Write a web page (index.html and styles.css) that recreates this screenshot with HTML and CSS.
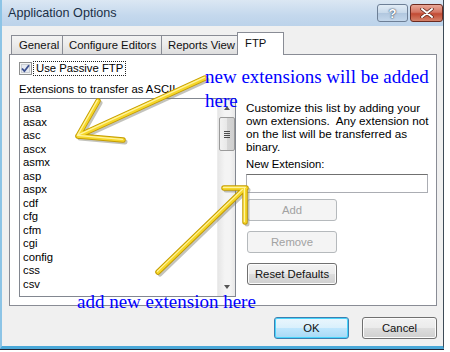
FILE: index.html
```html
<!DOCTYPE html>
<html lang="en">
<head>
	<meta charset="utf-8" />
	<title>Application Options</title>
	<link rel="stylesheet" href="styles.css">
</head>
<body>
<div class="page">
	<div class="window">
		<div class="titlebar">
			<span class="title">Application Options</span>
			<div class="caption-buttons">
				<span class="cap-btn cap-help">?</span>
				<span class="cap-btn cap-close">
					<svg width="14" height="10" viewBox="0 0 14 10"><path d="M2 1 L12 9 M12 1 L2 9" stroke="#5a2318" stroke-width="3.4" stroke-linecap="round"/><path d="M2 1 L12 9 M12 1 L2 9" stroke="#fff" stroke-width="2" stroke-linecap="round"/></svg>
				</span>
			</div>
		</div>

		<div class="client">
			<div class="tabs">
				<span class="tab tab-general">General</span>
				<span class="tab tab-editors">Configure Editors</span>
				<span class="tab tab-reports">Reports View</span>
				<span class="tab tab-ftp selected">FTP</span>
			</div>

			<div class="tab-panel">
				<div class="left-col">
					<div class="passive-row">
						<svg class="checkbox" width="13" height="13" viewBox="0 0 13 13">
							<rect x="0.5" y="0.5" width="12" height="12" fill="#f4f4f4" stroke="#8e8f8f"/>
							<rect x="2.5" y="2.5" width="8" height="8" fill="#e6eaf0" stroke="#c9cdd3"/>
							<path d="M3 6.5 L5.4 9.2 L10 3.2" fill="none" stroke="#3b4f8f" stroke-width="1.8"/>
						</svg>
						<span class="focus-label">Use Passive FTP</span>
					</div>
					<div class="ascii-label">Extensions to transfer as ASCII</div>
					<div class="listbox">
						<ul class="ext-list">
							<li>asa</li>
							<li>asax</li>
							<li>asc</li>
							<li>ascx</li>
							<li>asmx</li>
							<li>asp</li>
							<li>aspx</li>
							<li>cdf</li>
							<li>cfg</li>
							<li>cfm</li>
							<li>cgi</li>
							<li>config</li>
							<li>css</li>
							<li>csv</li>
						</ul>
						<div class="scrollbar">
							<span class="scroll-arrow up"></span>
							<span class="scroll-thumb"><span class="grip"></span></span>
							<span class="scroll-track"></span>
							<span class="scroll-arrow down"></span>
						</div>
					</div>
				</div>

				<div class="right-col">
					<p class="hint">
						Customize this list by adding your<br>
						own extensions.&nbsp; Any extension not<br>
						on the list will be transferred as<br>
						binary.
					</p>
					<div class="new-label">New Extension:</div>
					<div class="text-input"></div>
					<span class="button disabled">Add</span>
					<span class="button disabled">Remove</span>
					<span class="button">Reset Defaults</span>
				</div>
			</div>

			<div class="footer">
				<span class="button dialog-btn default">OK</span>
				<span class="button dialog-btn">Cancel</span>
			</div>
		</div>
	</div>

	<!-- annotations drawn over the screenshot -->
	<svg class="arrows" width="450" height="352" viewBox="0 0 450 352">
		<g class="shadow" stroke="#7a7a6a" stroke-opacity="0.45" stroke-width="5" stroke-linecap="round" fill="none" transform="translate(2 2)">
			<path d="M205 78 L78 136 M78 136 L98 101 M78 136 L123 140"/>
			<path d="M158 272 L243 190 M224 188 L246 188 M245 188 L245 222"/>
		</g>
		<g stroke="#c49c00" stroke-width="5.5" stroke-linecap="round" fill="none">
			<path d="M205 78 L78 136 M78 136 L98 101 M78 136 L123 140"/>
			<path d="M158 272 L243 190 M224 188 L246 188 M245 188 L245 222"/>
		</g>
		<g stroke="#f6d72a" stroke-width="3.6" stroke-linecap="round" fill="none">
			<path d="M205 78 L78 136 M78 136 L98 101 M78 136 L123 140"/>
			<path d="M158 272 L243 190 M224 188 L246 188 M245 188 L245 222"/>
		</g>
		<g stroke="#fff3a0" stroke-width="1.2" stroke-linecap="round" fill="none" transform="translate(-0.6 -0.6)">
			<path d="M205 78 L78 136 M78 136 L98 101 M78 136 L123 140"/>
			<path d="M158 272 L243 190 M224 188 L246 188 M245 188 L245 222"/>
		</g>
	</svg>
	<div class="note note-top">new extensions will be added<br>here</div>
	<div class="note note-bottom">add new extension here</div>
</div>
</body>
</html>
```

FILE: styles.css
```css
body {
	margin: 0;
	background: #fff;
	font-family: "Liberation Sans", Arial, sans-serif;
	font-size: 11.3px;
	color: #000;
}
.page {
	position: relative;
	width: 450px;
	height: 352px;
	overflow: hidden;
}
.window {
	box-sizing: border-box;
	width: 444px;
	height: 349px;
	background: #f0f0f0;
	border-left: 2px solid #8cc4e6;
	border-right: 1px solid #3d4a57;
	border-bottom: 3px solid #4aa8d8;
	box-shadow: 0 1px 0 #223;
	display: flex;
	flex-direction: column;
}
.titlebar {
	height: 26px;
	display: flex;
	align-items: flex-start;
	justify-content: space-between;
	background: linear-gradient(#dbe7f3, #c4d8ed 60%, #bcd3ea);
}
.title {
	margin: 6px 0 0 6px;
	font-size: 12.6px;
	color: #1b2f46;
}
.caption-buttons {
	display: flex;
	gap: 2px;
	margin-top: 4px;
}
.cap-btn {
	box-sizing: border-box;
	height: 18px;
	border: 1px solid #6d7f96;
	border-radius: 3px;
	display: flex;
	align-items: center;
	justify-content: center;
}
.cap-help {
	width: 31px;
	background: linear-gradient(#e2ecf6, #c8d9ea 48%, #b1c7df 52%, #c4d7eb);
	color: #fff;
	font-weight: bold;
	font-size: 13px;
	text-shadow: 0 0 2px #34465e, 0 0 1px #34465e;
}
.cap-close {
	width: 33px;
	border-color: #6b2a20;
	background: linear-gradient(#e9a898, #d47563 45%, #c24a33 55%, #d5826a);
}
.client {
	flex: 1;
	display: flex;
	flex-direction: column;
	padding: 6px 0 0 7px;
}
.tabs {
	display: flex;
	align-items: flex-end;
	height: 22px;
	padding-left: 2px;
	position: relative;
	z-index: 1;
}
.tab {
	box-sizing: border-box;
	height: 19px;
	margin-right: -1px;
	padding: 3px 0 0 6px;
	border: 1px solid #898c95;
	border-bottom: none;
	background: linear-gradient(#f3f3f3, #ebebeb 50%, #dedede);
	white-space: nowrap;
	overflow: hidden;
	color: #111;
}
.tab-general { width: 52px; padding-left: 7px; }
.tab-editors { width: 100px; }
.tab-reports { width: 77px; }
.tab-ftp {
	width: 47px;
	height: 23px;
	margin-bottom: -1px;
	padding: 4px 0 0 7px;
	background: #fff;
}
.tab-panel {
	box-sizing: border-box;
	width: 428px;
	height: 252px;
	border: 1px solid #898c95;
	background: #fff;
	display: flex;
	gap: 10px;
	padding: 6px 7px 0 9px;
}
.left-col {
	width: 217px;
	display: flex;
	flex-direction: column;
}
.passive-row {
	display: flex;
	align-items: center;
	height: 15px;
}
.focus-label {
	margin-left: 1px;
	padding: 0 2px;
	line-height: 13px;
	border: 1px dotted #222;
}
.ascii-label {
	margin-top: 6px;
	line-height: 14px;
}
.listbox {
	box-sizing: border-box;
	margin-top: 2px;
	height: 199px;
	border: 1px solid #828790;
	background: #fff;
	display: flex;
	overflow: hidden;
}
.ext-list {
	flex: 1;
	list-style: none;
	margin: 0;
	padding: 3px 0 0 3px;
	line-height: 13.5px;
}
.scrollbar {
	width: 17px;
	display: flex;
	flex-direction: column;
	align-items: center;
	background: linear-gradient(90deg, #e6e6e6, #f4f4f4 40%, #f4f4f4 70%, #e8e8e8);
	border-left: 1px solid #ececec;
}
.scroll-arrow {
	height: 18px;
	width: 17px;
	display: flex;
	align-items: center;
	justify-content: center;
}
.scroll-arrow::after {
	content: "";
	border-left: 3.5px solid transparent;
	border-right: 3.5px solid transparent;
}
.scroll-arrow.up::after { border-bottom: 4px solid #555; }
.scroll-arrow.down::after { border-top: 4px solid #555; }
.scroll-thumb {
	box-sizing: border-box;
	width: 16px;
	height: 34px;
	border: 1px solid #9a9a9a;
	border-radius: 2px;
	background: linear-gradient(90deg, #f2f2f2, #e8e8e8 50%, #d6d6d6 52%, #cfcfcf);
	display: flex;
	align-items: center;
	justify-content: center;
}
.grip {
	width: 6px;
	height: 7px;
	background: repeating-linear-gradient(#4c4c4c 0 1px, transparent 1px 2px);
}
.scroll-track {
	flex: 1;
}
.right-col {
	width: 182px;
	display: flex;
	flex-direction: column;
	align-items: flex-start;
}
.hint {
	margin: 40px 0 0;
	line-height: 13px;
	font-size: 11.7px;
	white-space: nowrap;
}
.new-label {
	margin-top: 5px;
	line-height: 13px;
}
.text-input {
	box-sizing: border-box;
	width: 182px;
	height: 19px;
	margin-top: 3px;
	border: 1px solid #abadb3;
	border-top-color: #707070;
	background: #fff;
}
.button {
	box-sizing: border-box;
	width: 90px;
	height: 22px;
	margin: 6px 0 4px 1px;
	border: 1px solid #707070;
	border-radius: 3px;
	background: linear-gradient(#f2f2f2, #ebebeb 50%, #dddddd 52%, #cfcfcf);
	box-shadow: inset 0 0 0 1px #fcfcfc;
	display: flex;
	align-items: center;
	justify-content: center;
	color: #111;
}
.button.disabled {
	border-color: #b5b9bc;
	background: #f4f4f4;
	color: #a2a2a2;
	box-shadow: none;
}
.footer {
	display: flex;
	justify-content: flex-end;
	gap: 13px;
	padding: 11px 6px 0 0;
}
.dialog-btn {
	width: 75px;
	margin: 0;
}
.dialog-btn.default {
	border-color: #3c7fb1;
	background: linear-gradient(#eaf6fd, #d9f0fc 50%, #bee6fd 52%, #a7d9f5);
	box-shadow: inset 0 0 0 1px #48d5fc;
}
.arrows {
	position: absolute;
	left: 0;
	top: 0;
}
.note {
	position: absolute;
	font-family: "Liberation Serif", "Times New Roman", serif;
	font-size: 19px;
	line-height: 24px;
	color: #0000ff;
	white-space: nowrap;
}
.note-top {
	left: 205px;
	top: 65px;
}
.note-bottom {
	left: 77px;
	top: 290px;
}
```
